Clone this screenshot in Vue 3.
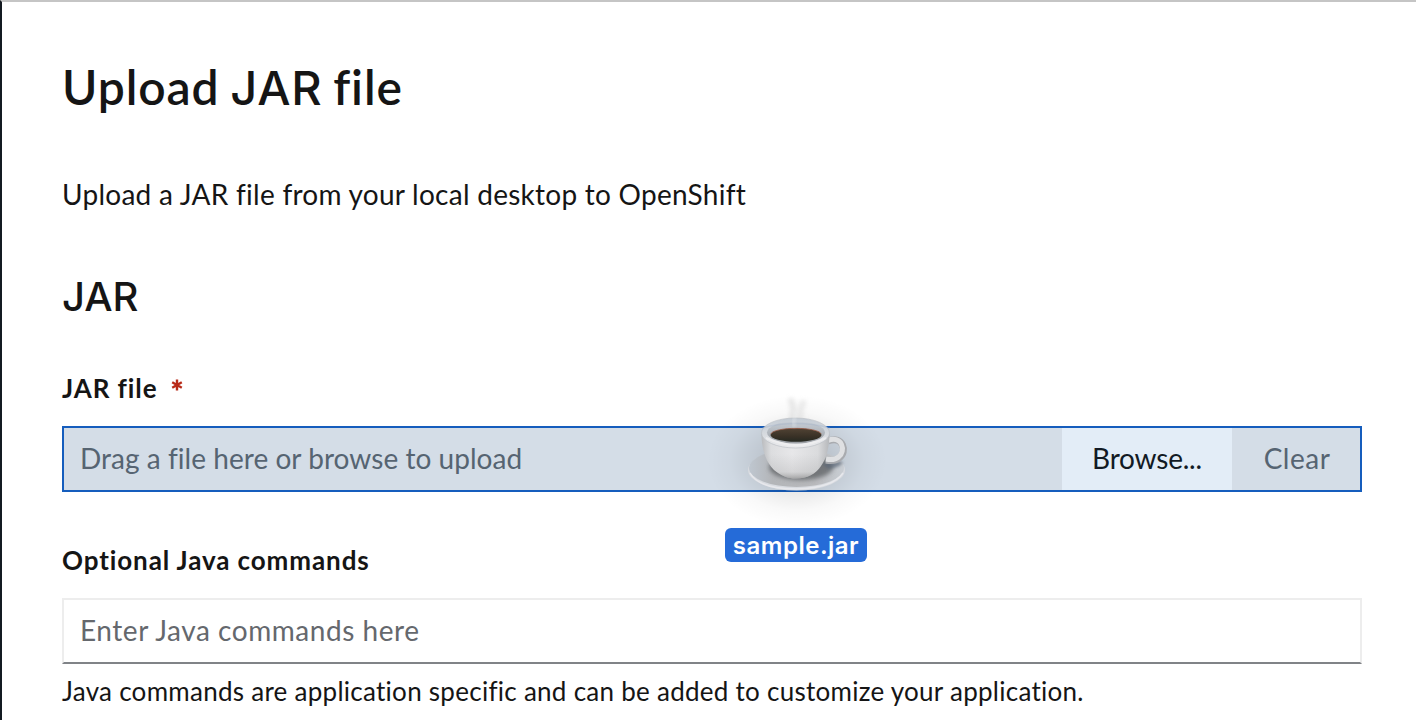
<script setup>
const fileName = 'sample.jar'
</script>

<template>
  <main class="page">
    <h1 class="title">Upload <span class="acronym">JAR</span> file</h1>
    <p class="intro">Upload a JAR file from your local desktop to OpenShift</p>
    <h2 class="section">JAR</h2>

    <div class="label label-file"><span>JAR file</span>
      <svg class="required" viewBox="0 0 12 12" aria-label="required">
        <path d="M6 .6v10.8M1.2 3.3l9.6 5.4M10.8 3.3L1.2 8.7" />
      </svg>
    </div>
    <div class="upload">
      <div class="drop">Drag a file here or browse to upload</div>
      <button class="browse">Browse...</button>
      <button class="clear">Clear</button>
    </div>

    <div class="label label-commands">Optional Java commands</div>
    <div class="field">Enter Java commands here</div>
    <p class="helper">Java commands are application specific and can be added to customize your application.</p>

    <div class="dragged">
      <svg class="cup" viewBox="0 0 200 150" width="200" height="150">
        <defs>
          <radialGradient id="halo">
            <stop offset="0" stop-color="#000" stop-opacity=".2" />
            <stop offset=".45" stop-color="#000" stop-opacity=".09" />
            <stop offset=".75" stop-color="#000" stop-opacity=".025" />
            <stop offset="1" stop-color="#000" stop-opacity="0" />
          </radialGradient>
          <linearGradient id="saucer" x1="0" y1="0" x2="1" y2="0">
            <stop offset="0" stop-color="#bfc7d0" />
            <stop offset=".25" stop-color="#b3b5b8" />
            <stop offset=".7" stop-color="#b8b9bc" />
            <stop offset="1" stop-color="#c9ced4" />
          </linearGradient>
          <linearGradient id="body" x1="0" y1="0" x2="1" y2="0">
            <stop offset="0" stop-color="#b9bbbe" />
            <stop offset=".14" stop-color="#dcdddf" />
            <stop offset=".45" stop-color="#e7e7e9" />
            <stop offset=".83" stop-color="#dadbdd" />
            <stop offset="1" stop-color="#b5b7ba" />
          </linearGradient>
          <linearGradient id="shade" x1="0" y1="0" x2="0" y2="1">
            <stop offset=".45" stop-color="#777" stop-opacity="0" />
            <stop offset=".85" stop-color="#777" stop-opacity=".16" />
            <stop offset="1" stop-color="#555" stop-opacity=".45" />
          </linearGradient>
          <linearGradient id="rim" x1="0" y1="0" x2="0" y2="1">
            <stop offset="0" stop-color="#c4ccd5" />
            <stop offset=".5" stop-color="#d5d9de" />
            <stop offset="1" stop-color="#ececee" />
          </linearGradient>
          <linearGradient id="inside" x1="0" y1="0" x2="0" y2="1">
            <stop offset="0" stop-color="#c7ced6" />
            <stop offset="1" stop-color="#9a9ea3" />
          </linearGradient>
          <linearGradient id="coffee" x1="0" y1="0" x2="0" y2="1">
            <stop offset="0" stop-color="#514334" />
            <stop offset=".6" stop-color="#393126" />
            <stop offset="1" stop-color="#252821" />
          </linearGradient>
          <filter id="soft" x="-50%" y="-50%" width="200%" height="200%"><feGaussianBlur stdDeviation="2.2" /></filter>
          <filter id="fine" x="-50%" y="-50%" width="200%" height="200%"><feGaussianBlur stdDeviation="1.4" /></filter>
        </defs>
        <ellipse cx="98" cy="81" rx="90" ry="66" fill="url(#halo)" />
        <g fill="none" stroke="#d2d2d2" stroke-linecap="round" filter="url(#soft)">
          <path d="M96 48C89 38 98 30 92 21" stroke-width="6" opacity=".5" />
          <path d="M99 48C104 39 99 31 104 23" stroke-width="6" opacity=".45" />
        </g>
        <ellipse cx="97.500" cy="90" rx="48.500" ry="20.500" fill="#d8dbe0" />
        <ellipse cx="97.500" cy="88" rx="47.500" ry="19" fill="url(#saucer)" />
        <ellipse cx="102" cy="87" rx="32" ry="13" fill="#55585c" opacity=".7" filter="url(#soft)" />
        <path d="M123 84Q135 80 144 82Q142 87 130 89Z" fill="#596575" opacity=".7" filter="url(#fine)" />
        <path d="M51 93Q60 109 97.500 109Q134 108 144 93" fill="none" stroke="#e7e8ec" stroke-width="1.500" />
        <path d="M129 61C144 55 149 72 140 78C136 81 132 81 127 80" fill="none" stroke="#a9abaf" stroke-width="7" />
        <path d="M129 60.500C143 55 147.500 71 139.500 77C136 80 132 80 127 79" fill="none" stroke="#dfe0e2" stroke-width="5" />
        <path d="M62.500 54C62.500 65 65 80 75 90C82 96 89 98.500 97 98.500C108 98.500 117 94 122 86C128 78 130.500 65 130.500 54Z" fill="url(#body)" />
        <path d="M62.500 54C62.500 65 65 80 75 90C82 96 89 98.500 97 98.500C108 98.500 117 94 122 86C128 78 130.500 65 130.500 54Z" fill="url(#shade)" />
        <ellipse cx="96.500" cy="53" rx="34" ry="15" fill="url(#rim)" stroke="#bbc0c6" stroke-width=".7" />
        <ellipse cx="97" cy="52.500" rx="29" ry="11" fill="url(#inside)" />
        <path d="M63 48Q97 39 131 48" fill="none" stroke="#8fa5c2" stroke-width="1.500" opacity=".25" />
        <ellipse cx="97" cy="55" rx="25.500" ry="6.800" fill="url(#coffee)" />
        <path d="M71.800 54C75 46.500 119 46.500 122.200 54" fill="none" stroke="#955640" stroke-width=".8" />
        <path d="M67 58Q97 72 127 58" fill="none" stroke="#f0f0f1" stroke-width="2" opacity=".75" />
        <path d="M96 47C91 42 99 38 95 31" fill="none" stroke="#eef0f2" stroke-width="2.500" opacity=".45" filter="url(#fine)" />
      </svg>
      <div class="filename">{{ fileName }}</div>
    </div>
  </main>
</template>

<style>
html, body { background: #fff; overflow: hidden; }
</style>

<style scoped>
.page {
  position: relative;
  box-sizing: border-box;
  width: 1416px;
  height: 720px;
  overflow: hidden;
  padding: 55px 54px 0 60px;
  border-left: 2px solid #131a21;
  border-top: 2px solid #c5c5c5;
  background: #fff;
  color: #151515;
  font-family: Lato, "Liberation Sans", sans-serif;
  font-size: 28px;
  font-variant-ligatures: none;
  white-space: nowrap;
}
h1, h2, p { margin: 0; }
.title { height: 60px; font-size: 48px; line-height: 60px; font-weight: 600; letter-spacing: .9px; word-spacing: -2px; }
.acronym { font-family: Inter, sans-serif; font-size: 47px; font-weight: 500; line-height: 1; letter-spacing: .7px; }
.intro { margin-top: 56px; line-height: 42px; letter-spacing: .26px; }
.section { margin-top: 56px; font-family: Inter, sans-serif; font-size: 40px; line-height: 52px; font-weight: 500; letter-spacing: 0; }
.label { font-size: 26px; line-height: 40px; font-weight: 700; letter-spacing: .9px; }
.label-file { display: flex; margin-top: 45px; }
.required { width: 12px; height: 12px; margin: 11px 0 0 14px; fill: none; stroke: #b82a18; stroke-width: 2.400; }
.upload {
  box-sizing: border-box;
  display: grid;
  grid-template-columns: 1fr 170px 128px;
  height: 66px;
  margin-top: 18px;
  border: 2px solid #155dbd;
  background: #d4dde7;
  line-height: 61px;
}
.drop { padding-left: 16px; color: #566472; letter-spacing: .04px; }
button { padding: 0 0 1px; border: 0; font: inherit; line-height: 59px; letter-spacing: .5px; }
.browse { background: #e3edf7; color: #121a24; letter-spacing: -.2px; }
.clear { padding-left: 2px; background: #d4dde7; color: #566472; }
.label-commands { margin-top: 48px; }
.field {
  box-sizing: border-box;
  height: 66px;
  margin-top: 18px;
  padding-left: 16px;
  border: 2px solid #ededed;
  border-bottom-color: #808387;
  line-height: 61px;
  color: #65686d;
  letter-spacing: .55px;
}
.helper { margin-top: 7px; font-size: 26px; line-height: 40px; letter-spacing: .27px; }
.dragged { position: absolute; left: 697px; top: 378px; width: 200px; }
.cup { display: block; }
.filename {
  box-sizing: border-box;
  width: 142px;
  height: 34px;
  margin: -2px auto 0 26px;
  border-radius: 6px;
  background: #256bd8;
  color: #fff;
  font: 600 24px/35px Inter, sans-serif;
  letter-spacing: .5px;
  text-align: center;
}
</style>
